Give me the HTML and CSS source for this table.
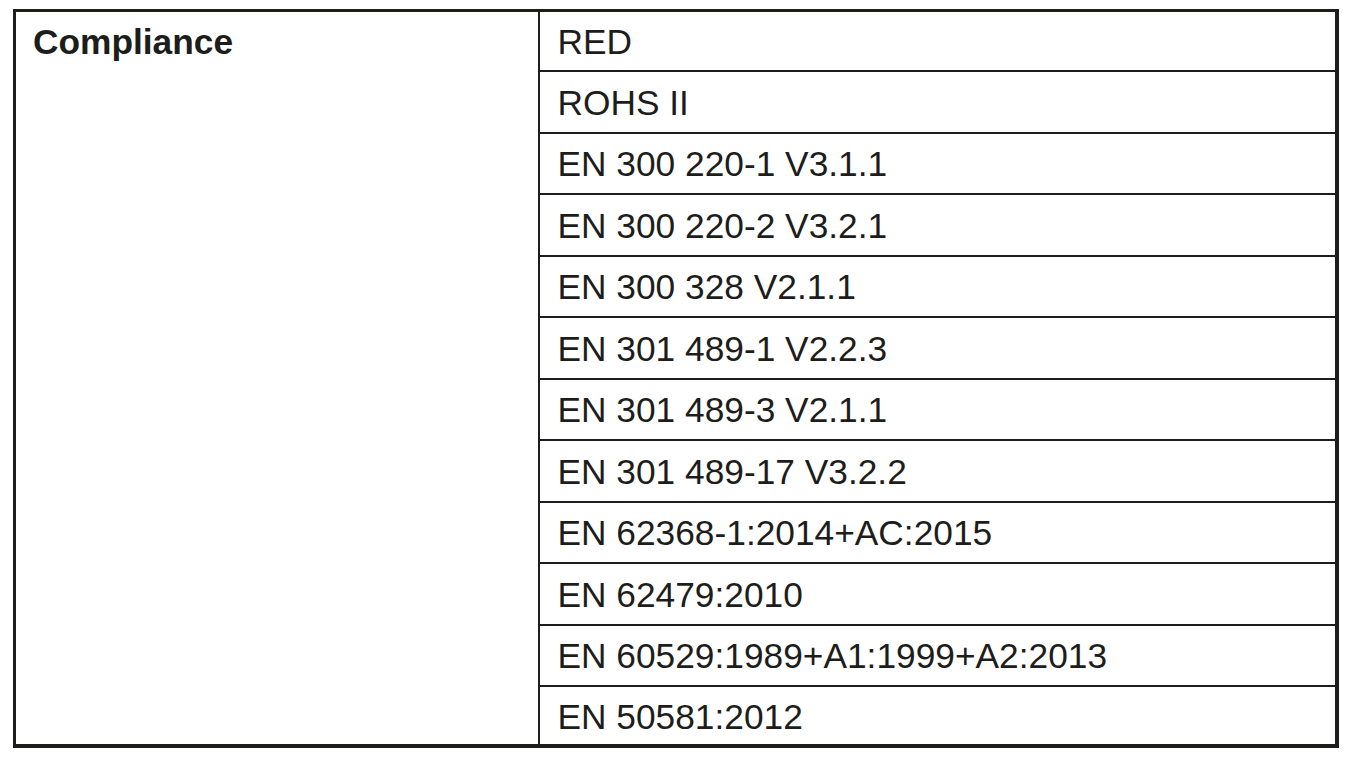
FILE: index.html
```html
<!DOCTYPE html>
<html lang="en">
<head>
<meta charset="utf-8">
<title>Compliance</title>
<link rel="stylesheet" href="styles.css">
</head>
<body>
<div class="spec">
  <div class="label-col">
    <div class="label">Compliance</div>
  </div>
  <div class="value-col">
    <div class="row">RED</div>
    <div class="row">ROHS II</div>
    <div class="row">EN 300 220-1 V3.1.1</div>
    <div class="row">EN 300 220-2 V3.2.1</div>
    <div class="row">EN 300 328 V2.1.1</div>
    <div class="row">EN 301 489-1 V2.2.3</div>
    <div class="row">EN 301 489-3 V2.1.1</div>
    <div class="row">EN 301 489-17 V3.2.2</div>
    <div class="row">EN 62368-1:2014+AC:2015</div>
    <div class="row">EN 62479:2010</div>
    <div class="row">EN 60529:1989+A1:1999+A2:2013</div>
    <div class="row">EN 50581:2012</div>
  </div>
</div>
</body>
</html>
```
FILE: styles.css
```css
html, body {
  margin: 0;
  padding: 0;
  background: #ffffff;
}
body {
  padding: 9px 0 0 13px;
  font-family: "Liberation Sans", Arial, sans-serif;
  color: #1d1d1b;
}
.spec {
  width: 1326px;
  height: 739px;
  box-sizing: border-box;
  border-style: solid;
  border-color: #1d1d1b;
  border-width: 3px 4px 4px 3.5px;
  display: flex;
}
.label-col {
  width: 521.5px;
  flex: none;
  border-right: 2px solid #1d1d1b;
}
.label {
  height: 58px;
  box-sizing: border-box;
  padding-top: 2px;
  display: flex;
  align-items: center;
  padding-left: 17px;
  font-weight: bold;
  font-size: 35.3px;
}
.value-col {
  flex: 1;
  display: flex;
  flex-direction: column;
}
.row {
  box-sizing: border-box;
  height: 61.5px;
  flex: none;
  display: flex;
  align-items: center;
  padding-left: 18px;
  padding-top: 2px;
  font-size: 35.3px;
  border-top: 2px solid #1d1d1b;
}
.row:first-child {
  height: 58px;
  border-top: none;
}
.row:last-child {
  height: 59px;
}
```
